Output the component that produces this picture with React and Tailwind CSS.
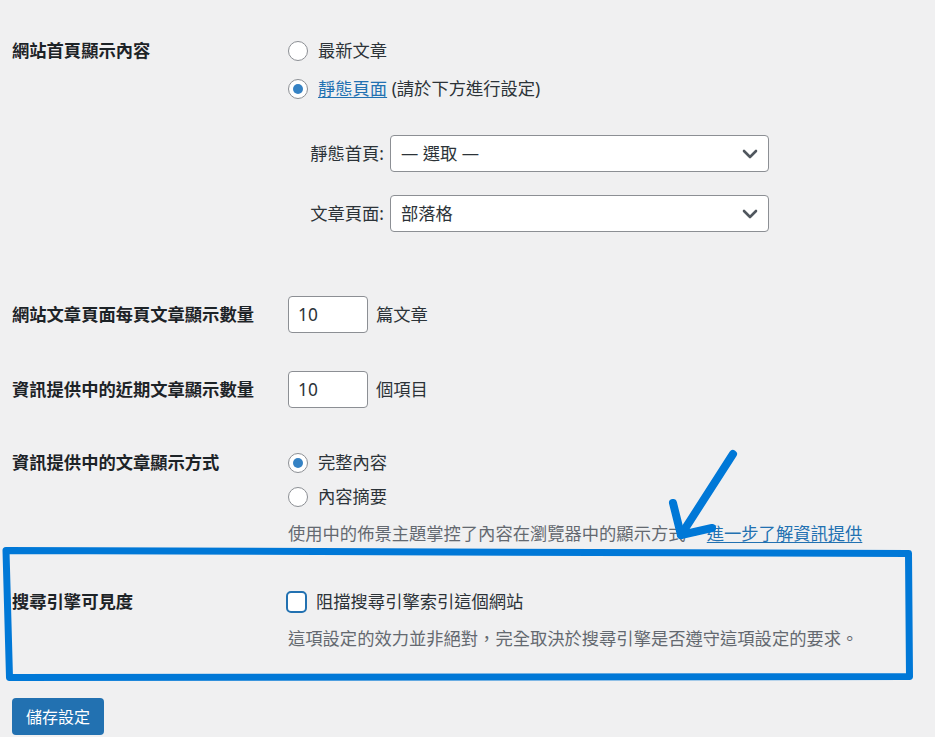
import React from "react";

const FONT = { fontFamily: '"Noto Sans", "Noto Sans CJK TC", sans-serif' };

function Radio({ checked }) {
  return (
    <span className="w-[20px] h-[20px] rounded-full border border-[#8c8f94] bg-white flex items-center justify-center shrink-0">
      {checked && <span className="w-[10px] h-[10px] rounded-full bg-[#3582c4]" />}
    </span>
  );
}

function Chevron() {
  return (
    <svg width="16" height="10" viewBox="0 0 16 10" className="shrink-0">
      <polyline points="2,2 8,8 14,2" fill="none" stroke="#50575e" strokeWidth="2.6" strokeLinecap="round" strokeLinejoin="round" />
    </svg>
  );
}

function Select({ value }) {
  return (
    <div className="w-[379px] h-[37px] bg-white border border-[#8c8f94] rounded-[4px] flex items-center justify-between pl-[10px] pr-[10px] text-[17.3px] text-[#2c3338] leading-[24px]">
      <span>{value}</span>
      <Chevron />
    </div>
  );
}

function Label({ children }) {
  return (
    <div className="w-[288px] shrink-0 pl-[12px] h-[26px] flex items-center font-semibold text-[#1d2327] text-[17.3px] leading-[24px]">
      {children}
    </div>
  );
}

export default function App() {
  return (
    <div className="relative w-[935px] h-[737px] overflow-hidden bg-[#f0f0f1] text-[#2c3338]" style={FONT}>
      <div className="flex flex-col pt-[38px]">
        {/* Section 1 */}
        <div className="flex">
          <Label>網站首頁顯示內容</Label>
          <div className="flex flex-col text-[17.3px] leading-[24px]">
            <div className="h-[26px] flex items-center gap-[10px]">
              <Radio />
              <span>最新文章</span>
            </div>
            <div className="h-[26px] flex items-center gap-[10px] mt-[12px]">
              <Radio checked />
              <span>
                <span className="text-[#2271b1] underline underline-offset-2">靜態頁面</span> (請於下方進行設定)
              </span>
            </div>
            <div className="flex items-center mt-[33px]">
              <div className="w-[102px] text-right pr-[6px] text-[#2c3338]">靜態首頁:</div>
              <Select value="— 選取 —" />
            </div>
            <div className="flex items-center mt-[23px]">
              <div className="w-[102px] text-right pr-[6px] text-[#2c3338]">文章頁面:</div>
              <Select value="部落格" />
            </div>
          </div>
        </div>

        {/* Section 2 */}
        <div className="flex items-center mt-[64px]">
          <Label>網站文章頁面每頁文章顯示數量</Label>
          <div className="flex items-center text-[17.3px] leading-[24px]">
            <div className="w-[80px] h-[37px] bg-white border border-[#8c8f94] rounded-[4px] flex items-center pl-[9px] text-[#2c3338]">10</div>
            <span className="ml-[8px]">篇文章</span>
          </div>
        </div>

        {/* Section 3 */}
        <div className="flex items-center mt-[38px]">
          <Label>資訊提供中的近期文章顯示數量</Label>
          <div className="flex items-center text-[17.3px] leading-[24px]">
            <div className="w-[80px] h-[37px] bg-white border border-[#8c8f94] rounded-[4px] flex items-center pl-[9px] text-[#2c3338]">10</div>
            <span className="ml-[8px]">個項目</span>
          </div>
        </div>

        {/* Section 4 */}
        <div className="flex mt-[42px]">
          <Label>資訊提供中的文章顯示方式</Label>
          <div className="flex flex-col text-[17.3px] leading-[24px]">
            <div className="h-[26px] flex items-center gap-[10px]">
              <Radio checked />
              <span>完整內容</span>
            </div>
            <div className="h-[26px] flex items-center gap-[10px] mt-[8px]">
              <Radio />
              <span>內容摘要</span>
            </div>
            <div className="mt-[12px] text-[#646970] whitespace-nowrap">
              使用中的佈景主題掌控了內容在瀏覽器中的顯示方式。
              <span className="text-[#2271b1] underline underline-offset-2 ml-[4px]">進一步了解資訊提供</span>
            </div>
          </div>
        </div>

        {/* Section 5 */}
        <div className="flex mt-[43px]">
          <Label>搜尋引擎可見度</Label>
          <div className="flex flex-col text-[17.3px] leading-[24px]">
            <div className="h-[26px] flex items-center gap-[9px]">
              <span className="w-[21px] h-[22px] rounded-[5px] border-2 border-[#2271b1] bg-white shrink-0 -ml-[2px]" />
              <span>阻擋搜尋引擎索引這個網站</span>
            </div>
            <div className="mt-[12px] text-[#646970] whitespace-nowrap">
              這項設定的效力並非絕對，完全取決於搜尋引擎是否遵守這項設定的要求。
            </div>
          </div>
        </div>

        {/* Button */}
        <div className="pl-[12px] mt-[47px]">
          <div className="w-[92px] h-[37px] bg-[#2271b1] rounded-[4px] text-white text-[16px] flex items-center justify-center">
            儲存設定
          </div>
        </div>
      </div>

      {/* Annotation overlay */}
      <svg className="absolute left-0 top-0 pointer-events-none" width="935" height="737" viewBox="0 0 935 737">
        <polygon
          points="6,550.5 908.5,553.5 909.5,676.5 9.5,677.5"
          fill="none"
          stroke="#0078d7"
          strokeWidth="7"
          strokeLinejoin="round"
        />
        <line x1="733" y1="454" x2="681" y2="535" stroke="#0078d7" strokeWidth="8" strokeLinecap="round" />
        <polyline points="673,503 681,535 712,528" fill="none" stroke="#0078d7" strokeWidth="8" strokeLinecap="round" strokeLinejoin="round" />
      </svg>
    </div>
  );
}
